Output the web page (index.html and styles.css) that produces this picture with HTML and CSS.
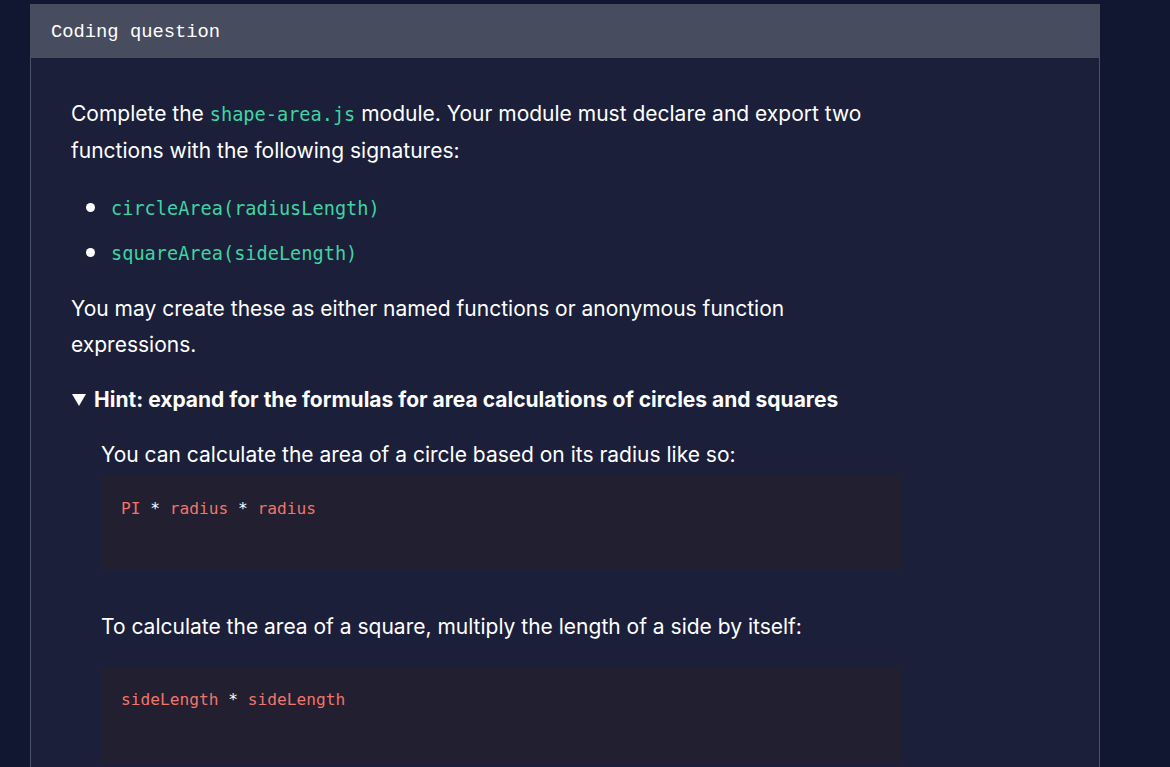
FILE: index.html
```html
<!DOCTYPE html>
<html>
<head>
<meta charset="utf-8">
<link rel="stylesheet" href="styles.css">
</head>
<body>
<div class="page">
  <section class="card">
    <header class="card-head">Coding question</header>
    <div class="card-body">
      <p class="para">Complete the <code class="ic">shape-area.js</code> module. Your module must declare and export two functions with the following signatures:</p>
      <ul class="sigs">
        <li><code class="ic">circleArea(radiusLength)</code></li>
        <li><code class="ic">squareArea(sideLength)</code></li>
      </ul>
      <p class="para">You may create these as either named functions or anonymous function expressions.</p>
      <details class="hint" open>
        <summary class="hint-sum"><span class="tri"></span>Hint: expand for the formulas for area calculations of circles and squares</summary>
        <div class="hint-body">
          <p class="para">You can calculate the area of a circle based on its radius like so:</p>
          <pre class="block first"><span class="v">PI</span> <span class="op">*</span> <span class="v">radius</span> <span class="op">*</span> <span class="v">radius</span></pre>
          <p class="para p-gap">To calculate the area of a square, multiply the length of a side by itself:</p>
          <pre class="block second"><span class="v">sideLength</span> <span class="op">*</span> <span class="v">sideLength</span></pre>
        </div>
      </details>
    </div>
  </section>
</div>
</body>
</html>
```
FILE: styles.css
```css
html, body {
  margin: 0;
  padding: 0;
  background: #111631;
  height: 767px;
  overflow: hidden;
}
.page {
  padding: 4px 0 0 30px;
}
.card {
  width: 1070px;
}
.card-head {
  background: #474c5f;
  height: 54px;
  box-sizing: border-box;
  padding: 1px 21px 0 21px;
  display: flex;
  align-items: center;
  color: #ffffff;
  font-family: "Liberation Mono", monospace;
  font-size: 18.8px;
}
.card-body {
  background: #1b1f3a;
  border-left: 1px solid #4c5066;
  border-right: 1px solid #4c5066;
  padding: 38px 40px 40px 40px;
  height: 800px;
  color: #ffffff;
  font-family: Inter, "Liberation Sans", sans-serif;
  font-size: 21px;
}
.para {
  margin: 0;
  line-height: 36px;
  max-width: 800px;
}
.ic {
  font-family: "DejaVu Sans Mono", monospace;
  font-size: 18.6px;
  color: #3fd4a2;
}
.sigs {
  list-style: none;
  margin: 21px 0 19px 0;
  padding: 0 0 0 40px;
}
.sigs li {
  position: relative;
  line-height: 36px;
}
.sigs li + li {
  margin-top: 8px;
}
.sigs li::before {
  content: "";
  position: absolute;
  left: -25px;
  top: 13px;
  width: 9px;
  height: 9px;
  border-radius: 50%;
  background: #ffffff;
}
.hint {
  margin-top: 19px;
}
.hint-sum {
  list-style: none;
  display: flex;
  align-items: center;
  font-weight: 700;
  line-height: 36px;
  cursor: pointer;
}
.hint-sum::-webkit-details-marker {
  display: none;
}
.tri {
  width: 0;
  height: 0;
  border-left: 7px solid transparent;
  border-right: 7px solid transparent;
  border-top: 12px solid #ffffff;
  margin: 0 8px 0 1px;
}
.hint-body {
  padding: 19px 0 0 30px;
}
.block {
  margin: 0;
  width: 800px;
  box-sizing: border-box;
  background: #211f30;
  font-family: "DejaVu Sans Mono", monospace;
  font-size: 16.2px;
  line-height: 24px;
  color: #ffffff;
}
.block.first {
  margin-top: 2px;
  padding: 22px 20px 49px 20px;
}
.block.second {
  margin-top: 22px;
  padding: 21px 20px 51px 20px;
}
.p-gap {
  margin-top: 39px;
}
.v {
  color: #f0756a;
}
.op {
  color: #ffffff;
}
```
